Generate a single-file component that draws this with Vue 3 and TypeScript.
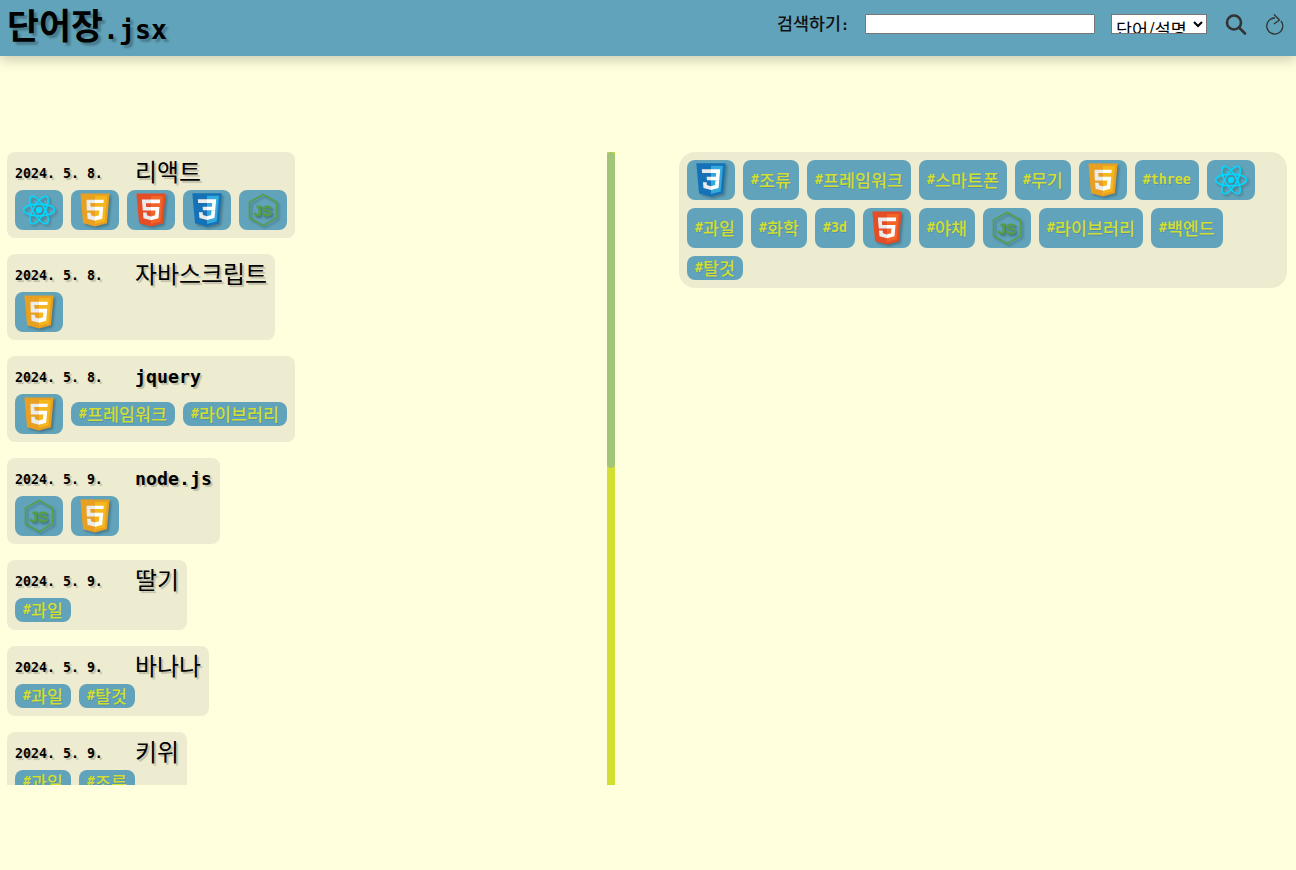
<script setup lang="ts">
import { onMounted, ref } from 'vue'

interface Word {
  date: string
  title: string
  tags: string[]
}

const icons = ['react', 'js', 'html', 'css', 'node']

const words: Word[] = [
  { date: '2024. 5. 8.', title: '리액트', tags: ['react', 'js', 'html', 'css', 'node'] },
  { date: '2024. 5. 8.', title: '자바스크립트', tags: ['js'] },
  { date: '2024. 5. 8.', title: 'jquery', tags: ['js', '프레임워크', '라이브러리'] },
  { date: '2024. 5. 9.', title: 'node.js', tags: ['node', 'js'] },
  { date: '2024. 5. 9.', title: '딸기', tags: ['과일'] },
  { date: '2024. 5. 9.', title: '바나나', tags: ['과일', '탈것'] },
  { date: '2024. 5. 9.', title: '키위', tags: ['과일', '조류'] },
  { date: '2024. 5. 9.', title: '아이폰', tags: ['스마트폰'] },
  { date: '2024. 5. 9.', title: '갤럭시', tags: ['스마트폰'] },
  { date: '2024. 5. 9.', title: '칼', tags: ['무기'] },
  { date: '2024. 5. 9.', title: '당근', tags: ['야채'] },
  { date: '2024. 5. 9.', title: '나트륨', tags: ['화학'] },
  { date: '2024. 5. 9.', title: 'spring', tags: ['백엔드'] },
  { date: '2024. 5. 9.', title: 'three.js', tags: ['js', 'three', '3d'] },
]

const allTags = [
  'css', '조류', '프레임워크', '스마트폰', '무기', 'js', 'three', 'react',
  '과일', '화학', '3d', 'html', '야채', 'node', '라이브러리', '백엔드', '탈것',
]

function runs(text: string): { text: string; hangul: boolean }[] {
  return (text.match(/[\uac00-\ud7a3]+|[^\uac00-\ud7a3]+/g) ?? []).map((part) => ({
    text: part,
    hangul: /[\uac00-\ud7a3]/.test(part),
  }))
}

const listEl = ref<HTMLElement | null>(null)
const thumbHeight = ref(315)

onMounted(() => {
  const el = listEl.value
  if (el) thumbHeight.value = Math.round((el.clientHeight * el.clientHeight) / el.scrollHeight)
})
</script>

<template>
  <div class="page">
    <svg class="defs" aria-hidden="true">
      <symbol id="ic-html" viewBox="0 0 128 128">
        <path fill="#E44D26" d="M19.037 113.876L9.032 1.661h109.936l-10.016 112.198-45.019 12.48z" />
        <path fill="#F16529" d="M64 116.8l36.378-10.086 8.559-95.878H64z" />
        <path fill="#EBEBEB" d="M64 52.455H45.788L44.53 38.361H64V24.599H29.489l.33 3.692 3.382 37.927H64zm0 35.743l-.061.017-15.327-4.14-.979-10.975H33.816l1.928 21.609 28.193 7.826.063-.017z" />
        <path fill="#fff" d="M63.952 52.455v13.763h16.947l-1.597 17.849-15.35 4.143v14.319l28.215-7.82.207-2.325 3.234-36.233.335-3.696h-3.708zm0-27.856v13.762h33.244l.276-3.092.628-6.978.329-3.692z" />
      </symbol>
      <symbol id="ic-js" viewBox="0 0 128 128">
        <path fill="#E9A020" d="M19.037 113.876L9.032 1.661h109.936l-10.016 112.198-45.019 12.48z" />
        <path fill="#F4B71E" d="M64 116.8l36.378-10.086 8.559-95.878H64z" />
        <path fill="#EBEBEB" d="M32 25H64V38H46L47.5 52H64V66H33ZM34.5 74H48L49 84L64 88V104L36 97Z" />
        <path fill="#fff" d="M64 25H97L96 38H64ZM64 52H95L91 97L64 104V88L79 84L80.5 66H64Z" />
      </symbol>
      <symbol id="ic-css" viewBox="0 0 128 128">
        <path fill="#1572B6" d="M18.814 114.123L8.76 1.352h110.48l-10.064 112.754-45.243 12.543-45.119-12.526z" />
        <path fill="#33A9DC" d="M64.001 117.062l36.559-10.136 8.601-96.354h-45.16v106.49z" />
        <path fill="#fff" d="M64.001 51.429h18.302l1.264-14.163H64.001V23.435h34.682l-.332 3.711-3.4 38.114h-30.95V51.429z" />
        <path fill="#EBEBEB" d="M64.083 87.349l-.061.018-15.403-4.159-.985-11.031H33.752l1.937 21.717 28.331 7.863.063-.018v-14.39z" />
        <path fill="#fff" d="M81.127 64.675l-1.666 18.522-15.426 4.164v14.39l28.354-7.858.208-2.337 2.406-26.881H81.127z" />
        <path fill="#EBEBEB" d="M64.048 23.435v13.831H30.64l-.277-3.108-.63-7.012-.331-3.711h34.646zm-.047 27.996v13.831H48.792l-.277-3.108-.631-7.012-.33-3.711h16.447z" />
      </symbol>
      <symbol id="ic-react" viewBox="0 0 128 128">
        <g fill="none" stroke="#00d8ff" stroke-width="6">
          <ellipse cx="64" cy="64" rx="58" ry="22" />
          <ellipse cx="64" cy="64" rx="58" ry="22" transform="rotate(60 64 64)" />
          <ellipse cx="64" cy="64" rx="58" ry="22" transform="rotate(120 64 64)" />
        </g>
        <circle cx="64" cy="64" r="12" fill="#00d8ff" />
      </symbol>
      <symbol id="ic-node" viewBox="0 0 128 128">
        <path fill="none" stroke="#539E43" stroke-width="6" stroke-linejoin="round" d="M64 5L115 34.500V93.500L64 123L13 93.500V34.500Z" />
        <text x="64" y="85" text-anchor="middle" class="node-text" fill="none" stroke="#539E43" stroke-width="4">JS</text>
      </symbol>
    </svg>

    <header class="top">
      <h1 class="logo">
        <span v-for="r in runs('단어장.jsx')" :key="r.text" :class="r.hangul ? 'ko' : 'en'">{{ r.text }}</span>
      </h1>
      <form class="search" @submit.prevent>
        <label class="search-label" for="q"><span class="ko">검색하기</span><span class="en">:</span></label>
        <input id="q" class="search-input" type="text" />
        <select class="search-select">
          <option>단어/설명</option>
          <option>단어</option>
          <option>설명</option>
        </select>
        <button class="icon-btn" type="button" aria-label="검색">
          <svg viewBox="0 0 24 24" width="24" height="24" fill="none" stroke="#333" stroke-width="2.600">
            <circle cx="11" cy="10.500" r="7" />
            <path d="M16 15.500L22 21.500" stroke-linecap="round" />
          </svg>
        </button>
        <button class="icon-btn" type="button" aria-label="새로고침">
          <svg viewBox="0 0 24 24" width="24" height="24" fill="none" stroke="#333" stroke-width="1.300">
            <path d="M12 6A8 8 0 1 0 18 9" />
            <path d="M11 2.500L16.500 8L11 12" />
          </svg>
        </button>
      </form>
    </header>

    <main class="content">
      <div class="list-wrap">
        <section ref="listEl" class="list">
          <article v-for="w in words" :key="w.title" class="card">
            <div class="card-head">
              <span class="date">{{ w.date }}</span>
              <h2 class="title">
                <span v-for="r in runs(w.title)" :key="r.text" :class="r.hangul ? 'ko' : 'en'">{{ r.text }}</span>
              </h2>
            </div>
            <div class="chips">
              <template v-for="t in w.tags" :key="t">
                <span v-if="icons.includes(t)" class="chip chip-icon">
                  <svg class="logo-icon"><use :href="'#ic-' + t" /></svg>
                </span>
                <span v-else class="chip">
                  <span class="en">#</span><span v-for="r in runs(t)" :key="r.text" :class="r.hangul ? 'ko' : 'en'">{{ r.text }}</span>
                </span>
              </template>
            </div>
          </article>
        </section>
        <div class="scroll-track">
          <div class="scroll-thumb" :style="{ height: thumbHeight + 'px' }"></div>
        </div>
      </div>

      <aside class="all-tags">
        <template v-for="t in allTags" :key="t">
          <span v-if="icons.includes(t)" class="chip chip-icon">
            <svg class="logo-icon"><use :href="'#ic-' + t" /></svg>
          </span>
          <span v-else class="chip">
            <span class="en">#</span><span v-for="r in runs(t)" :key="r.text" :class="r.hangul ? 'ko' : 'en'">{{ r.text }}</span>
          </span>
        </template>
      </aside>
    </main>
  </div>
</template>

<style>
html,
body {
  margin: 0;
  background: #ffffdd;
}
</style>

<style scoped>
.page {
  height: 870px;
  overflow: hidden;
  background: #ffffdd;
  font-family: "Noto Sans CJK KR", "DejaVu Sans Mono", monospace;
  color: #000;
}

.defs {
  position: absolute;
  width: 0;
  height: 0;
}

.ko {
  font-family: "Noto Sans CJK KR", sans-serif;
  font-size: 1.087em;
  font-weight: 500;
}

.en {
  font-family: "DejaVu Sans Mono", monospace;
  font-size: 0.83em;
  font-weight: 700;
}

.top {
  position: relative;
  z-index: 1;
  display: flex;
  align-items: center;
  justify-content: space-between;
  box-sizing: border-box;
  height: 56px;
  padding: 0 9px 0 7px;
  background: #61a3ba;
  box-shadow: 0 4px 12px rgba(0, 0, 0, 0.2);
}

.logo {
  margin: 0 0 2px;
  font-size: 32px;
  line-height: 40px;
  font-weight: 700;
  text-shadow: 3px 3px 2px rgba(0, 0, 0, 0.25);
}

.logo .ko {
  font-weight: 700;
}

.search {
  display: flex;
  align-items: center;
  gap: 16px;
  margin-bottom: 8px;
}

.search-label {
  font-size: 16px;
  line-height: 20px;
  color: #111;
}

.search-input {
  box-sizing: border-box;
  width: 230px;
  height: 20px;
}

.search-select {
  box-sizing: border-box;
  width: 96px;
  height: 20px;
  padding: 0;
  font-family: "Noto Sans CJK KR", sans-serif;
  font-size: 17.400px;
  background: #fff;
}

.icon-btn {
  display: flex;
  width: 24px;
  height: 24px;
  padding: 0;
  border: 0;
  background: none;
}

.content {
  display: flex;
  align-items: flex-start;
  gap: 64px;
  padding: 96px 9px 0 7px;
}

.list-wrap {
  display: flex;
  flex: 0 0 608px;
  height: 633px;
}

.list {
  display: flex;
  flex: 1;
  flex-direction: column;
  align-items: flex-start;
  gap: 16px;
  overflow: hidden;
}

.scroll-track {
  flex: 0 0 8px;
  background: #d2de32;
}

.scroll-thumb {
  border-radius: 4px;
  background: #a2c579;
}

.card {
  flex: none;
  padding: 8px;
  border-radius: 8px;
  background: #eeecd0;
}

.card-head {
  display: flex;
  align-items: center;
  height: 30px;
  text-shadow: 2px 2px 1px rgba(0, 0, 0, 0.2);
}

.date {
  flex: none;
  width: 120px;
  margin-bottom: 4px;
  font-family: "DejaVu Sans Mono", monospace;
  font-size: 13.280px;
  font-weight: 700;
}

.title {
  margin: 0 0 8px;
  font-size: 22px;
  line-height: 28px;
  font-weight: 400;
  white-space: nowrap;
}

.title .ko {
  font-weight: 400;
}

.chips {
  display: flex;
  align-items: center;
  gap: 8px;
}

.chip {
  display: flex;
  align-items: center;
  justify-content: center;
  box-sizing: border-box;
  height: 24px;
  padding: 0 8px;
  border-radius: 8px;
  background: #61a3ba;
  color: #d2de32;
  font-size: 16px;
  line-height: 24px;
  white-space: nowrap;
  text-shadow: 1px 1px 0 rgba(0, 0, 0, 0.12);
}

.chip-icon {
  width: 48px;
  height: 40px;
  padding: 0;
}

.logo-icon {
  width: 34px;
  height: 34px;
  filter: drop-shadow(2px 2px 1px rgba(0, 0, 0, 0.25));
}

.node-text {
  font-family: "Liberation Sans", sans-serif;
  font-size: 58px;
  font-weight: 400;
}

.all-tags {
  display: flex;
  flex-wrap: wrap;
  gap: 8px;
  box-sizing: border-box;
  flex: 0 0 608px;
  padding: 8px;
  border-radius: 16px;
  background: #eeecd0;
}

.all-tags .chip:not(.chip-icon) {
  height: auto;
  min-height: 24px;
}
</style>
